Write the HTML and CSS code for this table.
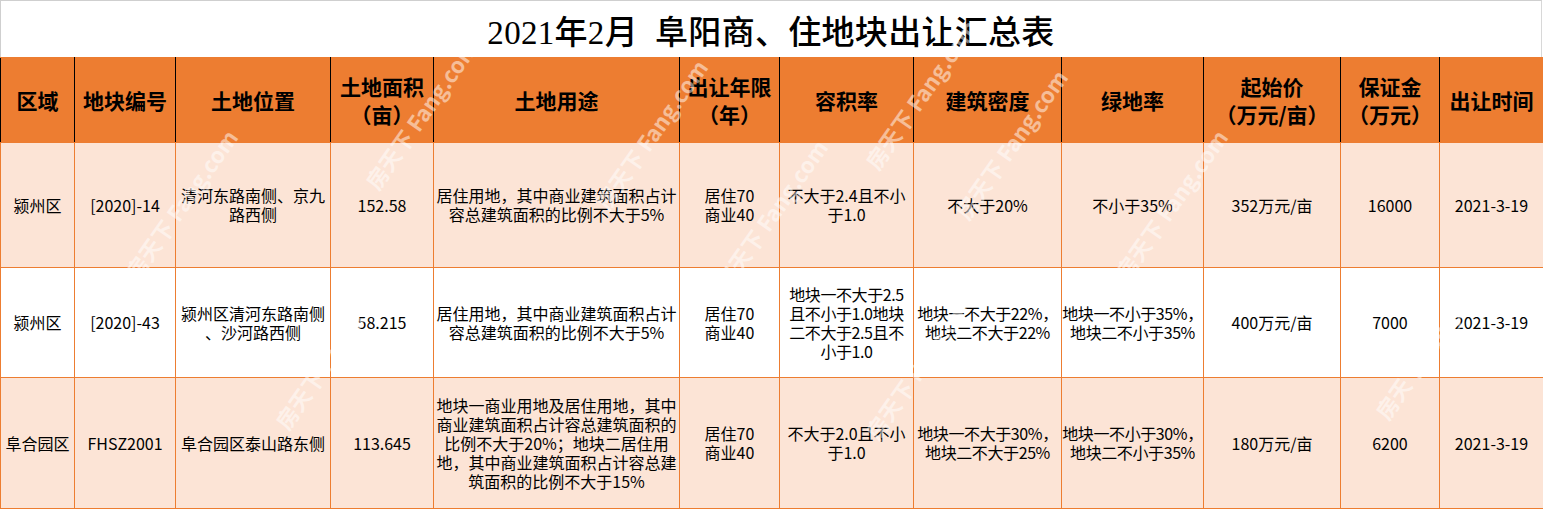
FILE: index.html
```html
<!DOCTYPE html>
<html lang="zh-CN">
<head>
<meta charset="utf-8">
<title>2021年2月 阜阳商、住地块出让汇总表</title>
<link rel="stylesheet" href="styles.css">
</head>
<body>
<div class="sheet">
  <div class="title">2021年2月&nbsp;&nbsp;阜阳商、住地块出让汇总表</div>
  <table class="grid">
    <colgroup>
      <col class="c1"><col class="c2"><col class="c3"><col class="c4"><col class="c5"><col class="c6">
      <col class="c7"><col class="c8"><col class="c9"><col class="c10"><col class="c11"><col class="c12">
    </colgroup>
    <thead>
      <tr class="head">
        <th>区域</th>
        <th>地块编号</th>
        <th>土地位置</th>
        <th>土地面积<br>（亩）</th>
        <th>土地用途</th>
        <th>出让年限<br>（年）</th>
        <th>容积率</th>
        <th>建筑密度</th>
        <th>绿地率</th>
        <th>起始价<br>（万元/亩）</th>
        <th>保证金<br>（万元）</th>
        <th>出让时间</th>
      </tr>
    </thead>
    <tbody>
      <tr class="r1 peach">
        <td>颍州区</td>
        <td>[2020]-14</td>
        <td>清河东路南侧、京九<br>路西侧</td>
        <td>152.58</td>
        <td>居住用地，其中商业建筑面积占计<br>容总建筑面积的比例不大于5%</td>
        <td>居住70<br>商业40</td>
        <td>不大于2.4且不小<br>于1.0</td>
        <td>不大于20%</td>
        <td>不小于35%</td>
        <td>352万元/亩</td>
        <td>16000</td>
        <td>2021-3-19</td>
      </tr>
      <tr class="r2">
        <td>颍州区</td>
        <td>[2020]-43</td>
        <td>颍州区清河东路南侧<br>、沙河路西侧</td>
        <td>58.215</td>
        <td>居住用地，其中商业建筑面积占计<br>容总建筑面积的比例不大于5%</td>
        <td>居住70<br>商业40</td>
        <td class="tight">地块一不大于2.5<br>且不小于1.0地块<br>二不大于2.5且不<br>小于1.0</td>
        <td class="tight">地块一不大于22%，<br>地块二不大于22%</td>
        <td class="tight">地块一不小于35%，<br>地块二不小于35%</td>
        <td>400万元/亩</td>
        <td>7000</td>
        <td>2021-3-19</td>
      </tr>
      <tr class="r3 peach">
        <td>阜合园区</td>
        <td>FHSZ2001</td>
        <td>阜合园区泰山路东侧</td>
        <td>113.645</td>
        <td>地块一商业用地及居住用地，其中<br>商业建筑面积占计容总建筑面积的<br>比例不大于20%；地块二居住用<br>地，其中商业建筑面积占计容总建<br>筑面积的比例不大于15%</td>
        <td>居住70<br>商业40</td>
        <td>不大于2.0且不小<br>于1.0</td>
        <td class="tight">地块一不大于30%，<br>地块二不大于25%</td>
        <td class="tight">地块一不小于30%，<br>地块二不小于35%</td>
        <td>180万元/亩</td>
        <td>6200</td>
        <td>2021-3-19</td>
      </tr>
    </tbody>
  </table>
  <div class="marks" aria-hidden="true">
    <span class="wm w2">房天下 Fang.com</span>
    <span class="wm w3">房天下 Fang.com</span>
    <span class="wm w4">房天下 Fang.com</span>
    <span class="wm w5">房天下 Fang.com</span>
    <span class="wm w6">房天下 Fang.com</span>
    <span class="wm w7">房天下 Fang.com</span>
    <span class="wm w8">房天下 Fang.com</span>
    <span class="wm w9">房天下 Fang.com</span>
    <span class="wm w10">房天下 Fang.com</span>
    <span class="wm w12">房天下 Fang.com</span>
  </div>
</div>
</body>
</html>
```
FILE: styles.css
```css
* { box-sizing: border-box; }
html, body { margin: 0; padding: 0; background: #ffffff; }
.sheet {
  position: relative;
  width: 1543px;
  height: 509px;
  overflow: hidden;
  font-family: "Noto Sans CJK SC", "Noto Sans", sans-serif;
  color: #000;
}
.title {
  height: 57px;
  border: 1px solid #cfcfcf;
  border-bottom: none;
  border-right-color: #d8d8d8;
  margin-right: 1px;
  display: flex;
  align-items: center;
  justify-content: center;
  font-family: "Liberation Serif", "Noto Sans CJK SC", serif;
  font-size: 33px;
  font-weight: 500;
  letter-spacing: 0.3px;
  padding-top: 2px;
}
.grid {
  border-collapse: collapse;
  table-layout: fixed;
  width: 1543px;
}
.c1 { width: 74px; }
.c2 { width: 101px; }
.c3 { width: 155px; }
.c4 { width: 103px; }
.c5 { width: 246px; }
.c6 { width: 100px; }
.c7 { width: 134px; }
.c8 { width: 148px; }
.c9 { width: 142px; }
.c10 { width: 137px; }
.c11 { width: 99px; }
.c12 { width: 104px; }
.grid th, .grid td {
  padding: 0;
  text-align: center;
  vertical-align: middle;
  overflow: hidden;
  white-space: nowrap;
}
.head th {
  background: #ed7d31;
  height: 85px;
  font-size: 21px;
  font-weight: 700;
  line-height: 28px;
  border-left: 1px solid #000;
  border-right: 1px solid #000;
  border-top: 1px solid #ed7d31;
  border-bottom: 1px solid #ed7d31;
}
.grid td {
  font-size: 16px;
  line-height: 19px;
  border: 1px solid #ed7d31;
  background: #ffffff;
}
.grid td.tight { letter-spacing: -0.4px; }
.grid tr.peach td { background: #fce4d6; }
.r1 td { height: 125px; }
.r2 td { height: 110px; }
.r3 td { height: 131px; }

.marks {
  position: absolute;
  inset: 0;
  pointer-events: none;
}
.wm {
  position: absolute;
  font-family: "Noto Sans CJK SC", "Noto Sans", sans-serif;
  font-size: 22px;
  font-weight: 700;
  color: rgba(255, 255, 255, 0.5);
  white-space: nowrap;
  transform: rotate(-55deg);
  transform-origin: left center;
}
.w2 { left: 130px; top: 260px; }
.w3 { left: 370px; top: 170px; }
.w4 { left: 600px; top: 190px; }
.w5 { left: 720px; top: 270px; }
.w6 { left: 870px; top: 150px; }
.w7 { left: 960px; top: 200px; }
.w8 { left: 1120px; top: 260px; }
.w9 { left: 280px; top: 410px; }
.w10 { left: 870px; top: 420px; }
.w12 { left: 1380px; top: 400px; }
```
